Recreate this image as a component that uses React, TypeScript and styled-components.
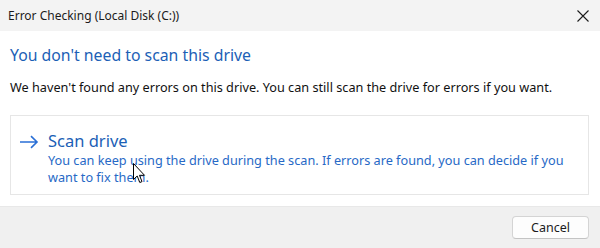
import styled, { createGlobalStyle } from 'styled-components';

const GlobalStyle = createGlobalStyle`
  html, body {
    margin: 0;
    padding: 0;
    background: #ffffff;
  }

  body {
    font-family: 'Noto Sans', 'Open Sans', sans-serif;
  }
`;

const Dialog = styled.div`
  position: relative;
  display: flex;
  flex-direction: column;

  width: 600px;
  height: 248px;
  overflow: hidden;

  background: #ffffff;
`;

const TitleBar = styled.div`
  display: flex;
  align-items: center;
  justify-content: space-between;

  height: 31px;
  padding: 0 8px 0 8px;

  background: #f3f3f3;
  color: #1b1b1b;
  font-size: 12px;
`;

const CloseButton = styled.button`
  display: flex;
  align-items: center;
  justify-content: center;

  width: 24px;
  height: 24px;
  margin-right: -3px;
  padding: 0;

  border: none;
  background: transparent;
  color: #1b1b1b;
`;

const Content = styled.div`
  display: flex;
  flex-direction: column;
  flex: 1;

  padding: 13px 11px 0 10px;
`;

const Heading = styled.h1`
  margin: 0;

  color: #1c5fb6;
  font-size: 15.8px;
  font-weight: 400;
  line-height: 22px;
`;

const Message = styled.p`
  margin: 13px 0 0 0;

  color: #111111;
  font-size: 12.7px;
  line-height: 16px;
`;

const CommandLink = styled.div`
  display: flex;
  align-items: flex-start;
  gap: 9px;

  margin-top: 20px;
  height: 80px;
  padding: 14px 10px 0 8px;
  box-sizing: border-box;

  border: 1px solid #e6e6e6;
`;

const ArrowIcon = styled.div`
  display: flex;
  margin-top: 5px;
  color: #2a6fd6;
`;

const LinkText = styled.div`
  display: flex;
  flex-direction: column;
`;

const LinkTitle = styled.span`
  color: #1c5fb6;
  font-size: 16.5px;
  line-height: 22px;
`;

const LinkDetail = styled.span`
  color: #2769c6;
  font-size: 12.7px;
  line-height: 17px;
`;

const Footer = styled.div`
  display: flex;
  align-items: center;
  justify-content: flex-end;

  height: 41px;
  padding: 0 11px 0 0;

  background: #f0f0f0;
  border-top: 1px solid #e8e8e8;
`;

const Button = styled.button`
  width: 77px;
  height: 23px;
  padding: 0;

  background: #fdfdfd;
  border: 1px solid #d4d4d4;
  border-bottom-color: #c4c4c4;
  border-radius: 4px;

  color: #1b1b1b;
  font-family: inherit;
  font-size: 12.5px;
`;

const Pointer = styled.svg`
  position: absolute;
  left: 133px;
  top: 163px;
`;

export default function App() {
  return (
    <>
      <GlobalStyle />
      <Dialog>
        <TitleBar>
          <span>Error Checking (Local Disk (C:))</span>
          <CloseButton aria-label="Close">
            <svg width="12" height="12" viewBox="0 0 12 12">
              <path d="M0.5 0.5 L11.5 11.5 M11.5 0.5 L0.5 11.5" stroke="currentColor" strokeWidth="1.1" fill="none" />
            </svg>
          </CloseButton>
        </TitleBar>
        <Content>
          <Heading>You don't need to scan this drive</Heading>
          <Message>
            We haven't found any errors on this drive. You can still scan the drive for errors if you want.
          </Message>
          <CommandLink>
            <ArrowIcon>
              <svg width="20" height="14" viewBox="0 0 20 14">
                <path d="M1 7 H18 M12 1.2 L18 7 L12 12.8" stroke="currentColor" strokeWidth="1.6" fill="none" />
              </svg>
            </ArrowIcon>
            <LinkText>
              <LinkTitle>Scan drive</LinkTitle>
              <LinkDetail>
                You can keep using the drive during the scan. If errors are found, you can decide if you want to fix them.
              </LinkDetail>
            </LinkText>
          </CommandLink>
        </Content>
        <Footer>
          <Button>Cancel</Button>
        </Footer>
        <Pointer width="13" height="21" viewBox="0 0 13 21">
          <path
            d="M0.5 0.5 L0.5 16.5 L4.2 13 L6.8 19.5 L9 18.6 L6.5 12.3 L11.5 12.3 Z"
            fill="#ffffff"
            stroke="#000000"
            strokeWidth="1"
            strokeLinejoin="round"
          />
        </Pointer>
      </Dialog>
    </>
  );
}
